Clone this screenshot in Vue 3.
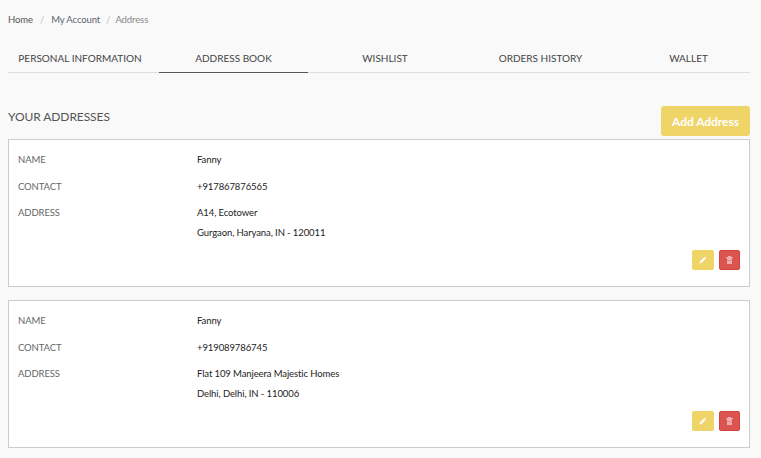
<script setup>
const tabs = [
  { label: 'PERSONAL INFORMATION' },
  { label: 'ADDRESS BOOK', active: true },
  { label: 'WISHLIST' },
  { label: 'ORDERS HISTORY' },
  { label: 'WALLET' }
]
const addresses = [
  { name: 'Fanny', contact: '+917867876565', line1: 'A14, Ecotower', line2: 'Gurgaon, Haryana, IN - 120011' },
  { name: 'Fanny', contact: '+919089786745', line1: 'Flat 109 Manjeera Majestic Homes', line2: 'Delhi, Delhi, IN - 110006' }
]
</script>

<template>
  <div class="page">
    <nav class="crumbs">
      <span class="c1">Home</span><span class="sep s1">/</span>
      <span class="c2">My Account</span><span class="sep s2">/</span>
      <span class="c3">Address</span>
    </nav>
    <div class="tabs">
      <div v-for="t in tabs" :key="t.label" class="tab" :class="{ active: t.active }">{{ t.label }}</div>
    </div>
    <div class="head">
      <h2>YOUR ADDRESSES</h2>
      <button class="add">Add Address</button>
    </div>
    <div v-for="(a, i) in addresses" :key="i" class="card">
      <div class="row r1"><span class="k">NAME</span><span class="v">{{ a.name }}</span></div>
      <div class="row r2"><span class="k">CONTACT</span><span class="v">{{ a.contact }}</span></div>
      <div class="row r3">
        <span class="k">ADDRESS</span>
        <div class="v"><div>{{ a.line1 }}</div><div class="l2">{{ a.line2 }}</div></div>
      </div>
      <div class="actions">
        <button class="ic edit" aria-label="Edit">
          <svg width="8" height="8" viewBox="0 0 8 8"><path d="M0.5 7.5 L0.9 5.6 L5.4 1.1 L6.9 2.6 L2.4 7.1 Z M5.9 0.6 L6.3 0.3 L7.7 1.7 L7.4 2.1 Z" fill="#fff"/></svg>
        </button>
        <button class="ic del" aria-label="Delete">
          <svg class="trash" width="7" height="8" viewBox="0 0 7 8"><path d="M2 0 H5 V1 H7 V2 H0 V1 H2 Z M1 2 H6 V8 H1 Z" fill="#efaeab"/><rect x="1" y="4" width="5" height="1" fill="#e58a86"/></svg>
        </button>
      </div>
    </div>
  </div>
</template>

<style>
html, body { margin: 0; background: #f9f9f9; }
</style>

<style scoped>
.page {
  padding: 0 11px 0 8px;
  width: 742px;
  font-family: Lato, sans-serif;
  background: #f9f9f9;
  height: 458px;
  overflow: hidden;
}
.crumbs {
  padding-top: 13px;
  height: 27px;
  line-height: 13px;
  font-size: 9.5px;
  letter-spacing: -0.1px;
  white-space: nowrap;
  color: #555;
}
.c2 { color: #5b6470; }
.c3 { color: #888; }
.sep { color: #bbb; }
.s1 { margin: 0 7px; }
.s2 { margin: 0 5px 0 6px; }
.tabs {
  display: grid;
  grid-template-columns: 151px 149px 149px 167px 126px;
  height: 32px;
  border-bottom: 1px solid #ddd;
}
.tab {
  font-size: 10px;
  line-height: 36px;
  text-align: center;
  color: #444;
  white-space: nowrap;
  height: 32px;
}
.tab:first-child { padding-right: 7px; }
.tab:nth-child(3) { padding-left: 5px; }
.tab:last-child { padding-left: 3px; }
.tab.active { border-bottom: 1px solid #555; height: 32px; }
.head {
  display: flex;
  justify-content: space-between;
  align-items: flex-start;
  height: 66px;
}
h2 {
  margin: 36px 0 0;
  font-size: 12px;
  line-height: 16px;
  font-weight: 400;
  letter-spacing: -0.08px;
  color: #555;
}
.add {
  margin-top: 33px;
  width: 89px;
  height: 30px;
  border: 0;
  border-radius: 3px;
  background: #efd568;
  color: #fff;
  font: 700 12px Lato, sans-serif;
  letter-spacing: -0.05px;
  padding: 0;
}
.card {
  position: relative;
  height: 148px;
  margin-bottom: 13px;
  border: 1px solid #ccc;
  background: #fff;
  box-sizing: border-box;
  font-size: 9.5px;
  letter-spacing: -0.1px;
  padding: 0 9px;
  width: 742px;
}
.row { display: flex; line-height: 13px; }
.r1 { padding-top: 13px; }
.r2 { padding-top: 14px; }
.r3 { padding-top: 13px; }
.k { width: 179px; color: #666; flex: none; }
.v { color: #222; }
.l2 { margin-top: 7px; }
.actions {
  position: absolute;
  right: 9px;
  bottom: 16px;
  display: flex;
  gap: 5px;
}
.ic {
  width: 22px;
  height: 20px;
  border: 0;
  padding: 0;
  border-radius: 2px;
  display: flex;
  align-items: center;
  justify-content: center;
}
.edit { background: #efd568; }
.del { background: #db544f; width: 21px; border: 1px solid #d2453f; }
.trash { flex: none; display: block; }
</style>
